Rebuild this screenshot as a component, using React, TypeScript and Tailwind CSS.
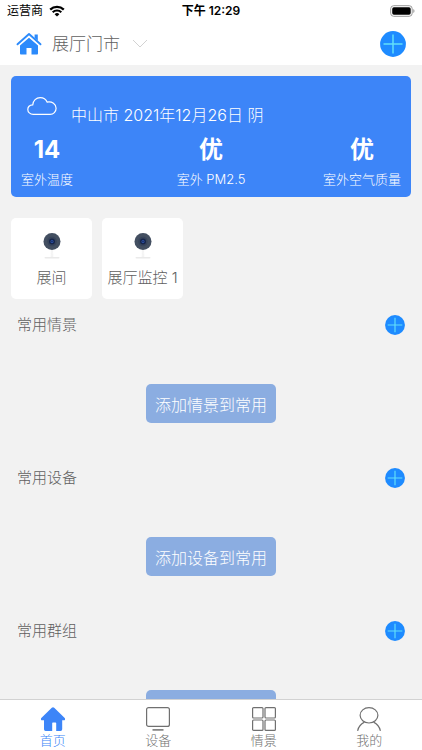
import React from "react";

function PlusCircle({ className }: { className: string }) {
  return (
    <svg viewBox="0 0 26 26" className={className} aria-hidden="true">
      <circle cx="13" cy="13" r="12.900" fill="#1e8bff" />
      <path d="M3.500 13h19M13 3.500v19" stroke="#62e0fa" strokeWidth="1.500" fill="none" />
    </svg>
  );
}

function Camera() {
  return (
    <svg viewBox="0 0 20 28" className="h-7 w-5" aria-hidden="true">
      <path d="M9.400 17h1.200l.3 8H9.100z" fill="#f8f8f8" stroke="#ececec" strokeWidth=".4" />
      <rect x="2.500" y="25" width="15" height="1.400" rx=".7" fill="#eaeaea" />
      <circle cx="10" cy="9.500" r="8.500" fill="#434f61" />
      <circle cx="10" cy="9.500" r="4.800" fill="#38455b" />
      <circle cx="10" cy="9.500" r="3" fill="#17264b" />
      <circle cx="10" cy="9.500" r="1.500" fill="#2b4fa6" />
      <circle cx="10" cy="9.500" r=".6" fill="#0d1733" />
    </svg>
  );
}

function StatusBar() {
  return (
    <div className="grid h-[22px] grid-cols-3 items-center px-[7px] text-[12px] text-black">
      <div className="flex items-center gap-1.5">
        <span>运营商</span>
        <svg viewBox="0 0 16 12" className="h-3 w-4" aria-hidden="true">
          <path d="M1.200 4.600a9.800 9.800 0 0 1 13.600 0" stroke="#000" strokeWidth="2.300" fill="none" />
          <path d="M3.700 7.300a6.200 6.200 0 0 1 8.600 0" stroke="#000" strokeWidth="2.100" fill="none" />
          <path d="M8 11.600 5.600 9.200a3.400 3.400 0 0 1 4.800 0z" fill="#000" />
        </svg>
      </div>
      <div className="text-center text-[12px] font-semibold whitespace-nowrap">下午 12:29</div>
      <svg viewBox="0 0 25 12" className="h-3 w-[25px] justify-self-end" aria-hidden="true">
        <rect x=".7" y=".7" width="21.500" height="10.600" rx="3" fill="none" stroke="#999" strokeWidth="1" />
        <rect x="2.200" y="2.200" width="18.500" height="7.600" rx="1.700" fill="#000" />
        <path d="M23.300 4v4c1.600-.7 1.600-3.300 0-4z" fill="#999" />
      </svg>
    </div>
  );
}

function Header() {
  return (
    <header className="flex h-[43px] items-center justify-between px-4">
      <button type="button" className="flex items-center text-[17px] font-light text-[#606060]">
        <svg viewBox="0 0 26 24" className="mr-2.5 h-6 w-[26px]" aria-hidden="true">
          <path d="M13 5.800 22 13.400v8.200q0 .9-.9.900h-5.600v-6.400h-5v6.400H4.900q-.9 0-.9-.9v-8.200z" fill="#2c8afb" />
          <path d="M13 4.600 23 12.900" stroke="#fff" strokeWidth="1" />
          <path d="M1.500 12.300 13 2l11.500 10.300" fill="none" stroke="#2c8afb" strokeWidth="1.900" strokeLinecap="round" strokeLinejoin="round" />
          <path d="M18.600 2.600h3.200v6.200l-3.200-2.800z" fill="#2c8afb" />
        </svg>
        <span className="pt-0.5">展厅门市</span>
        <svg viewBox="0 0 16 9" className="ml-3 h-[9px] w-4" aria-hidden="true">
          <path d="M1 1l7 7 7-7" fill="none" stroke="#d2d2d2" strokeWidth="1" />
        </svg>
      </button>
      <button type="button" aria-label="添加">
        <PlusCircle className="size-[26px]" />
      </button>
    </header>
  );
}

function Reading({ value, label }: { value: string; label: string }) {
  return (
    <div className="flex flex-col items-center whitespace-nowrap">
      <div className="text-[24px] leading-8 font-bold">{value}</div>
      <div className="mt-[3px] text-[13px] leading-5 font-light">{label}</div>
    </div>
  );
}

function Weather() {
  return (
    <section className="rounded-[5px] bg-[#3d85f8] px-2.5 pt-4 pb-2 text-white">
      <div className="flex h-[42px] items-start pl-1.5">
        <svg viewBox="0 0 30 20" className="mt-1 h-5 w-[30px]" aria-hidden="true">
          <path
            d="M6.200 18.300C3 18.300.8 16.200.8 13.500c0-2.500 2-4.500 5-4.700C6 4.500 9.200 1.600 13.200 1.600c3.200 0 5.800 1.800 6.900 4.500 5-.9 9 2 9 6.200 0 3.500-2.600 6-6 6z"
            fill="none"
            stroke="#fff"
            strokeWidth="1.200"
          />
        </svg>
        <p className="mt-[11px] ml-3.5 text-[16px] leading-6 font-light">中山市 2021年12月26日 阴</p>
      </div>
      <div className="grid grid-cols-[1fr_auto_1fr]">
        <div className="justify-self-start">
          <Reading value="14" label="室外温度" />
        </div>
        <Reading value="优" label="室外 PM2.5" />
        <div className="justify-self-end">
          <Reading value="优" label="室外空气质量" />
        </div>
      </div>
    </section>
  );
}

function CameraCard({ name }: { name: string }) {
  return (
    <button
      type="button"
      className="flex size-[81px] flex-col items-center rounded-[5px] bg-white pt-3.5 text-[15px] leading-6 font-light whitespace-nowrap text-[#606060]"
    >
      <Camera />
      <span className="mt-1.5">{name}</span>
    </button>
  );
}

function Favourites({ title, action }: { title: string; action: string }) {
  return (
    <section className="flex h-[153px] shrink-0 flex-col items-center">
      <div className="flex h-[51px] w-full items-center justify-between px-1.5">
        <h2 className="pt-0.5 text-[15px] font-light text-[#606060]">{title}</h2>
        <button type="button" aria-label={title}>
          <PlusCircle className="size-5" />
        </button>
      </div>
      <button
        type="button"
        className="mt-[34px] h-[39px] w-[130px] rounded-[5px] bg-[#8bade1] pt-0.5 text-[16px] font-light whitespace-nowrap text-white"
      >
        {action}
      </button>
    </section>
  );
}

function Tab({ label, active, children }: { label: string; active?: boolean; children: React.ReactNode }) {
  return (
    <a
      href="#"
      className={
        active
          ? "flex flex-1 flex-col items-center pt-[7px] text-[13px] leading-[19px] font-light text-[#3d85f8]"
          : "flex flex-1 flex-col items-center pt-[7px] text-[13px] leading-[19px] font-light text-[#707070]"
      }
    >
      {children}
      <span>{label}</span>
    </a>
  );
}

function TabBar() {
  return (
    <nav className="flex h-[51px] shrink-0 border-t border-[#d2d2d2] bg-white">
      <Tab label="首页" active>
        <svg viewBox="1 1 24 24" className="size-6 shrink-0" fill="currentColor" aria-hidden="true">
          <path d="M11.800 1.700q1.200-.9 2.400 0L24.700 12c.9 1 .4 2.300-.8 2.300H22.200v9q0 1.600-1.600 1.600h-4.400v-7.600q0-.7-.7-.7h-2.600q-.7 0-.7.7v7.600H5.600q-1.600 0-1.600-1.600v-9H2.100c-1.200 0-1.700-1.300-.8-2.300z" />
        </svg>
      </Tab>
      <Tab label="设备">
        <svg viewBox="1 1 24 24" className="size-6 shrink-0" fill="none" stroke="currentColor" strokeWidth="1.200" aria-hidden="true">
          <rect x="1.600" y="1.600" width="22.800" height="18.800" rx="2" />
          <path d="M7.500 23.900h11" strokeWidth="1.500" />
        </svg>
      </Tab>
      <Tab label="情景">
        <svg viewBox="1 1 24 24" className="size-6 shrink-0" fill="none" stroke="currentColor" strokeWidth="1.200" aria-hidden="true">
          <rect x="1.600" y="1.600" width="10.400" height="10.400" rx="1" />
          <rect x="14" y="1.600" width="10.400" height="10.400" rx="1" />
          <rect x="1.600" y="14" width="10.400" height="10.400" rx="1" />
          <rect x="14" y="14" width="10.400" height="10.400" rx="1" />
        </svg>
      </Tab>
      <Tab label="我的">
        <svg viewBox="1 1 24 24" className="size-6 shrink-0" fill="none" stroke="currentColor" strokeWidth="1.200" aria-hidden="true">
          <ellipse cx="13" cy="9.300" rx="8.900" ry="7.700" />
          <path d="M1.600 24.800c.8-3.800 3.200-6.900 6.800-8.700M24.400 24.800c-.8-3.800-3.200-6.900-6.800-8.700" />
        </svg>
      </Tab>
    </nav>
  );
}

export default function App() {
  return (
    <div className="flex h-screen flex-col bg-[#f2f2f2] font-['Inter','Noto_Sans_CJK_SC',sans-serif]">
      <div className="shrink-0 bg-white">
        <StatusBar />
        <Header />
      </div>
      <main className="flex min-h-0 flex-1 flex-col overflow-y-auto px-[11px] pt-[11px] [scrollbar-width:none]">
        <Weather />
        <div className="mt-[21px] flex gap-2.5">
          <CameraCard name="展间" />
          <CameraCard name="展厅监控 1" />
        </div>
        <Favourites title="常用情景" action="添加情景到常用" />
        <Favourites title="常用设备" action="添加设备到常用" />
        <Favourites title="常用群组" action="添加群组到常用" />
      </main>
      <TabBar />
    </div>
  );
}
